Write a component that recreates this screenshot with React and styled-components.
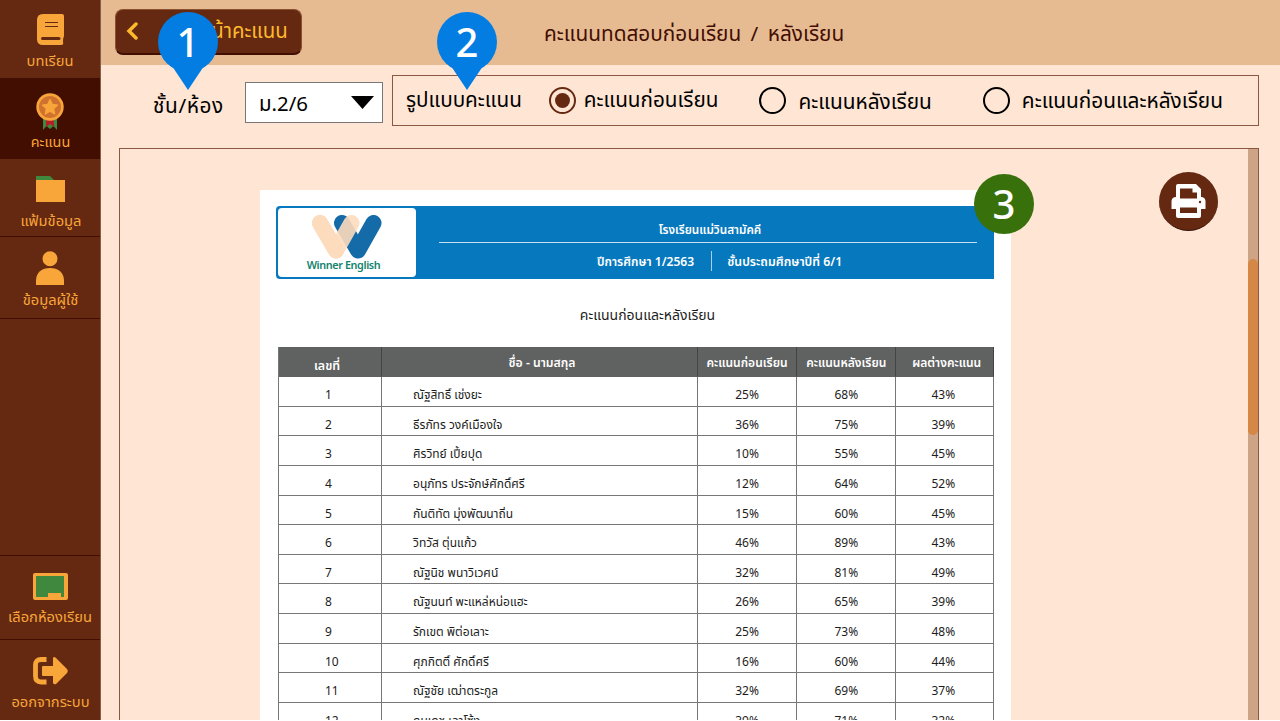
import React from 'react';
import styled, { createGlobalStyle } from 'styled-components';

const Global = createGlobalStyle`
  * { box-sizing: border-box; }
  html, body { margin: 0; height: 721px; overflow: hidden; background: #fff; }
  body { font-family: "Noto Sans", "Noto Sans Thai", "Prompt", sans-serif; }
`;

const Screen = styled.div`
  display: flex;
  width: 1280px;
  height: 720px;
  overflow: hidden;
  background: #ffe5d3;
`;

const Sidebar = styled.nav`
  display: flex;
  flex-direction: column;
  flex: none;
  width: 101px;
  background: #652911;
  border-right: 1px solid #8a5d49;
`;

const NavItem = styled.a`
  display: flex;
  flex-direction: column;
  align-items: center;
  flex: none;
  height: ${p => p.$h}px;
  padding-top: ${p => p.$top}px;
  background: ${p => (p.$active ? '#430e02' : 'transparent')};
  border-bottom: ${p => (p.$line ? '1px solid #430e02' : '0')};
  color: #f8a53a;
  svg { flex: none; display: block; }
`;

const NavSpace = styled.div`
  flex: 1;
  border-bottom: 1px solid #430e02;
`;

const Text = styled.span`
  display: block;
  flex: none;
  white-space: nowrap;
  font-size: ${p => p.$s}px;
  line-height: 24px;
  letter-spacing: ${p => p.$ls || 0}px;
  word-spacing: ${p => p.$ws || 0}px;
  font-weight: ${p => p.$w || 400};
  margin-top: ${p => p.$mt || 0}px;
  margin-left: ${p => p.$ml || 0}px;
`;

const Main = styled.main`
  display: flex;
  flex-direction: column;
  flex: 1;
  min-width: 0;
`;

const Header = styled.header`
  display: flex;
  flex: none;
  height: 65px;
  padding: 9px 0 0 14px;
  background: #e6bb92;
  color: #430e02;
`;

const BackButton = styled.button`
  display: flex;
  flex: none;
  width: 187px;
  height: 46px;
  padding: 0 0 0 10px;
  border: 1px solid #8a5030;
  border-bottom: 2px solid #430e02;
  border-radius: 8px;
  background: #652911;
  color: #fdb92e;
  font-family: inherit;
  svg { margin-top: 12px; flex: none; }
`;

const Filters = styled.section`
  display: flex;
  flex: none;
  height: 83px;
  padding: 10px 0 0 52px;
`;

const Select = styled.div`
  display: flex;
  flex: none;
  width: 138px;
  height: 41px;
  margin: 7px 0 0 21px;
  padding: 0 8px 0 13px;
  justify-content: space-between;
  border: 1px solid #777;
  background: #fff;
  svg { margin-top: 13px; }
`;

const FilterName = styled.div`
  display: flex;
  width: 71px;
`;

const RadioGroup = styled.div`
  display: flex;
  flex: none;
  width: 867px;
  height: 51px;
  margin-left: 9px;
  padding-left: 13px;
  border: 1px solid #8c5844;
`;

const Radio = styled.span`
  display: flex;
  flex: none;
  align-items: center;
  justify-content: center;
  width: 27px;
  height: 27px;
  margin: 11px 0 0 ${p => p.$ml}px;
  border: 2px solid ${p => (p.$on ? '#652911' : '#000')};
  border-radius: 50%;
  &::after {
    content: '';
    width: 15px;
    height: 15px;
    border-radius: 50%;
    background: ${p => (p.$on ? '#652911' : 'transparent')};
  }
`;

const Viewer = styled.section`
  display: flex;
  flex: 1;
  min-height: 0;
  width: 1140px;
  margin-left: 18px;
  padding-left: 140px;
  border: 1px solid #8c5844;
  border-bottom: 0;
  overflow: hidden;
`;

const Sheet = styled.article`
  flex: none;
  width: 751px;
  height: 700px;
  margin-top: 41px;
  padding: 16px 17px 0 16px;
  background: #fff;
  color: #1d1d1d;
`;

const Banner = styled.div`
  display: flex;
  height: 73px;
  padding: 2px;
  background: #0678be;
  border-radius: 4px 0 0 4px;
  color: #fff;
`;

const LogoBox = styled.div`
  display: flex;
  flex-direction: column;
  align-items: center;
  width: 138px;
  height: 69px;
  padding: 7px 0 0 0;
  border-radius: 4px;
  background: #fff;
  color: #12836d;
  svg { flex: none; }
`;

const BannerInfo = styled.div`
  width: 538px;
  margin-left: 23px;
`;

const BannerRow = styled.div`
  display: flex;
  height: ${p => p.$h}px;
  justify-content: ${p => (p.$center ? 'center' : 'flex-start')};
  border-bottom: ${p => (p.$center ? '1px solid #c5dff0' : '0')};
`;

const Divider = styled.i`
  width: 1px;
  height: 20px;
  margin: 8px 0 0 17px;
  background: #a9d0e8;
`;

const SheetTitle = styled.div`
  display: flex;
  justify-content: center;
  height: 68px;
  padding: 24px 0 0 25px;
`;

const Table = styled.div`
  width: 716px;
  margin-left: 2px;
  border-left: 1px solid #777;
`;

const Row = styled.div`
  display: grid;
  grid-template-columns: 103px 316px 99px 98.5px 98.5px;
  grid-template-rows: 100%;
  height: ${p => (p.$head ? 30.2 : 29.6)}px;
  background: ${p => (p.$head ? '#606261' : '#fff')};
  color: ${p => (p.$head ? '#fff' : '#1d1d1d')};
`;

const Cell = styled.div`
  display: flex;
  justify-content: ${p => (p.$left ? 'flex-start' : 'center')};
  padding-left: ${p => p.$pl || 0}px;
  border-right: 1px solid ${p => (p.$dark ? '#444' : '#777')};
  border-bottom: 1px solid ${p => (p.$dark ? '#606261' : '#777')};
`;

const PrintButton = styled.button`
  display: flex;
  flex: none;
  align-items: center;
  justify-content: center;
  width: 59px;
  height: 59px;
  margin: 23px 0 0 148px;
  padding: 0;
  border: 0;
  border-bottom: 1px solid #35100a;
  border-radius: 50%;
  background: #652911;
`;

const Track = styled.div`
  width: 10px;
  margin-left: auto;
  padding-top: 110px;
  background: #cea487;
`;

const Thumb = styled.div`
  height: 176px;
  border-radius: 5px;
  background: #d58745;
`;

const Marker = styled.div`
  position: absolute;
  left: ${p => p.$x}px;
  top: ${p => p.$y}px;
  width: 60px;
  height: 60px;
  border-radius: 50%;
  background: ${p => p.$c};
  color: #fff;
  font-size: 40px;
  font-weight: 500;
  line-height: 59px;
  text-align: center;
  svg { position: absolute; left: 14px; top: 54px; }
`;

const BookIcon = () => (
  <svg width="27" height="31" viewBox="0 0 27 31">
    <path d="M6 0H25Q27 0 27 2V22Q26 24 26 28Q27 31 24 31H6Q0 31 0 25V6Q0 0 6 0Z" fill="#f8a53a" />
    <path d="M8 8.500H21M8 12.500H21" stroke="#652911" strokeWidth="1.200" />
    <path d="M5.500 24.500H22" stroke="#652911" strokeWidth="3" strokeLinecap="round" />
  </svg>
);

const MedalIcon = () => (
  <svg width="28" height="38" viewBox="0 0 28 38">
    <path d="M7 24H21V37L17.500 33L14 36L10.500 33L7 37Z" fill="#3f883e" />
    <path d="M10 24H18V34L14 31L10 34Z" fill="#b3202c" />
    <circle cx="14" cy="14" r="13.700" fill="#f8a53a" />
    <circle cx="14" cy="14" r="11" fill="#d0722f" />
    <path d="M14 6.500L16.300 11.300L21.600 12L17.700 15.600L18.700 20.900L14 18.300L9.300 20.900L10.300 15.600L6.400 12L11.700 11.300Z" fill="#f8a53a" stroke="#f8a53a" strokeWidth="1.200" strokeLinejoin="round" />
  </svg>
);

const FolderIcon = () => (
  <svg width="29" height="26" viewBox="0 0 29 26">
    <path d="M0 0H14L18 4V8H0Z" fill="#3f883e" />
    <path d="M0 4H29V26H0Z" fill="#f8a53a" />
  </svg>
);

const PersonIcon = () => (
  <svg width="28" height="34" viewBox="0 0 28 34" fill="#f8a53a">
    <circle cx="14" cy="7.700" r="7.500" />
    <path d="M0 34V30C0 21 6 17 14 17S28 21 28 30V34Z" />
  </svg>
);

const BoardIcon = () => (
  <svg width="35" height="27" viewBox="0 0 35 27">
    <rect width="35" height="27" rx="2" fill="#f8a53a" />
    <path d="M3 3H31V24H28V20H15V24H3Z" fill="#3f883e" />
  </svg>
);

const ExitIcon = () => (
  <svg width="35" height="28" viewBox="0 0 35 28">
    <path d="M13.500 2.500H8Q2.500 2.500 2.500 8V19Q2.500 25 8 25H13.500" fill="none" stroke="#f8a53a" strokeWidth="4.800" />
    <path d="M10 9H20V1Q21 -1 23 1L34 12Q35.500 14 34 16L23 27Q21 28 20 26V19H10Q9 19 9 18V10Q9 9 10 9Z" fill="#f8a53a" />
  </svg>
);

const PrinterIcon = () => (
  <svg width="35" height="34" viewBox="0 0 35 34">
    <path d="M7 0H25L30 5V13Q34 13 34.500 17V25H30V32Q30 34 28 34H7Q5 34 5 32V25H0.500V17Q1 13 5 13V2Q5 0 7 0Z" fill="#fff" />
    <path d="M9 4.500H21.500V8.500H26V14.500H9Z M9 23.500H26V29H9Z" fill="#652911" />
    <circle cx="29" cy="18" r="1.200" fill="#652911" />
  </svg>
);

const Logo = () => (
  <svg width="70" height="44" viewBox="0 0 70 44" fill="none" strokeLinecap="round" strokeLinejoin="round" strokeWidth="16">
    <path d="M30 8L46 35.500L61.500 8" stroke="#146ba7" />
    <path d="M8 8L24 35.500L39.500 8" stroke="#fddbbd" strokeOpacity=".9" />
    <path d="M8 8L24 35.500" stroke="#fddbbd" />
  </svg>
);

const PinTail = () => (
  <svg width="32" height="24" viewBox="0 0 32 24"><path d="M0 0H32L16 24Z" fill="#047de2" /></svg>
);

const students = [
  ['ณัฐสิทธิ์ เช่งยะ', 25, 68, 43],
  ['ธีรภัทร วงค์เมืองใจ', 36, 75, 39],
  ['ศิรวิทย์ เปี้ยปุด', 10, 55, 45],
  ['อนุภัทร ประจักษ์ศักดิ์ศรี', 12, 64, 52],
  ['กันติทัต มุ่งพัฒนาถิ่น', 15, 60, 45],
  ['วิทวัส ตุ่นแก้ว', 46, 89, 43],
  ['ณัฐนิช พนาวิเวศน์', 32, 81, 49],
  ['ณัฐนนท์ พะแหล่หน่อแฮะ', 26, 65, 39],
  ['รักเขต พิต่อเลาะ', 25, 73, 48],
  ['ศุภกิตติ์ ศักดิ์ศรี', 16, 60, 44],
  ['ณัฐชัย เฒ่าตระกูล', 32, 69, 37],
  ['ดนุเดช เลาโซ้ง', 39, 71, 32],
];

export default function App() {
  return (
    <>
      <Global />
      <Screen>
        <Sidebar>
          <NavItem $h={78} $top={14}><BookIcon /><Text $s={14.7} $mt={3}>บทเรียน</Text></NavItem>
          <NavItem $h={81} $top={15} $active><MedalIcon /><Text $s={14.4} $mt={-1} $ml={1}>คะแนน</Text></NavItem>
          <NavItem $h={78} $top={17} $line><FolderIcon /><Text $s={14.7} $mt={6} $ml={2}>แฟ้มข้อมูล</Text></NavItem>
          <NavItem $h={82} $top={14} $line><PersonIcon /><Text $s={14.7} $mt={2} $ml={1}>ข้อมูลผู้ใช้</Text></NavItem>
          <NavSpace />
          <NavItem $h={84} $top={17} $line><BoardIcon /><Text $s={14.7} $mt={4}>เลือกห้องเรียน</Text></NavItem>
          <NavItem $h={80} $top={17}><ExitIcon /><Text $s={14.7} $mt={4} $ml={1}>ออกจากระบบ</Text></NavItem>
        </Sidebar>
        <Main>
          <Header>
            <BackButton>
              <svg width="12" height="18" viewBox="0 0 12 18"><path d="M10 2L3 9L10 16" fill="none" stroke="#fdb92e" strokeWidth="3.500" strokeLinecap="round" /></svg>
              <Text $s={20.4} $mt={8} $ml={25}>กลับหน้าคะแนน</Text>
            </BackButton>
            <Text $s={20.8} $ws={4} $mt={12} $ml={242}>คะแนนทดสอบก่อนเรียน / หลังเรียน</Text>
          </Header>
          <Filters>
            <FilterName><Text $s={20.8} $ls={0.6} $mt={18}>ชั้น/ห้อง</Text></FilterName>
            <Select>
              <Text $s={20.4} $mt={8}>ม.2/6</Text>
              <svg width="23" height="14" viewBox="0 0 23 14"><path d="M0 0H23L11.500 13Z" /></svg>
            </Select>
            <RadioGroup>
              <Text $s={20.7} $mt={11}>รูปแบบคะแนน</Text>
              <Radio $on $ml={27} />
              <Text $s={20.7} $mt={11} $ml={8}>คะแนนก่อนเรียน</Text>
              <Radio $ml={41} />
              <Text $s={20.8} $mt={13} $ml={12}>คะแนนหลังเรียน</Text>
              <Radio $ml={51} />
              <Text $s={20.8} $mt={12} $ml={12}>คะแนนก่อนและหลังเรียน</Text>
            </RadioGroup>
          </Filters>
          <Viewer>
            <Sheet>
              <Banner>
                <LogoBox><Logo /><Text $s={10.8} $w={600} $ls={-0.38} $mt={-6} $ml={-7}>Winner English</Text></LogoBox>
                <BannerInfo>
                  <BannerRow $h={35} $center><Text $s={11.7} $w={600} $mt={9} $ml={4}>โรงเรียนแม่วินสามัคคี</Text></BannerRow>
                  <BannerRow $h={34}>
                    <Text $s={12.1} $w={600} $mt={7} $ml={158}>ปีการศึกษา 1/2563</Text>
                    <Divider />
                    <Text $s={12.3} $w={600} $mt={7} $ml={15}>ชั้นประถมศึกษาปีที่ 6/1</Text>
                  </BannerRow>
                </BannerInfo>
              </Banner>
              <SheetTitle><Text $s={14}>คะแนนก่อนและหลังเรียน</Text></SheetTitle>
              <Table>
                <Row $head>
                  <Cell $dark><Text $s={12.4} $w={600} $mt={7} $ml={-6}>เลขที่</Text></Cell>
                  <Cell $dark><Text $s={12.2} $w={600} $mt={4} $ml={5}>ชื่อ - นามสกุล</Text></Cell>
                  <Cell $dark><Text $s={12} $w={600} $mt={4}>คะแนนก่อนเรียน</Text></Cell>
                  <Cell $dark><Text $s={12} $w={600} $mt={4} $ml={1}>คะแนนหลังเรียน</Text></Cell>
                  <Cell $dark><Text $s={12} $w={600} $mt={4} $ml={5}>ผลต่างคะแนน</Text></Cell>
                </Row>
                {students.map(([name, before, after, diff], i) => (
                  <Row key={name}>
                    <Cell $left $pl={46}><Text $s={12} $mt={6}>{i + 1}</Text></Cell>
                    <Cell $left $pl={31}><Text $s={12} $mt={6}>{name}</Text></Cell>
                    <Cell><Text $s={12} $mt={6}>{before}%</Text></Cell>
                    <Cell><Text $s={12} $mt={6} $ml={1}>{after}%</Text></Cell>
                    <Cell><Text $s={12} $mt={6} $ml={-2}>{diff}%</Text></Cell>
                  </Row>
                ))}
              </Table>
            </Sheet>
            <PrintButton><PrinterIcon /></PrintButton>
            <Track><Thumb /></Track>
          </Viewer>
        </Main>
      </Screen>
      <Marker $x={158} $y={12} $c="#047de2"><PinTail />1</Marker>
      <Marker $x={437} $y={12} $c="#047de2"><PinTail />2</Marker>
      <Marker $x={974} $y={174} $c="#38710c">3</Marker>
    </>
  );
}
